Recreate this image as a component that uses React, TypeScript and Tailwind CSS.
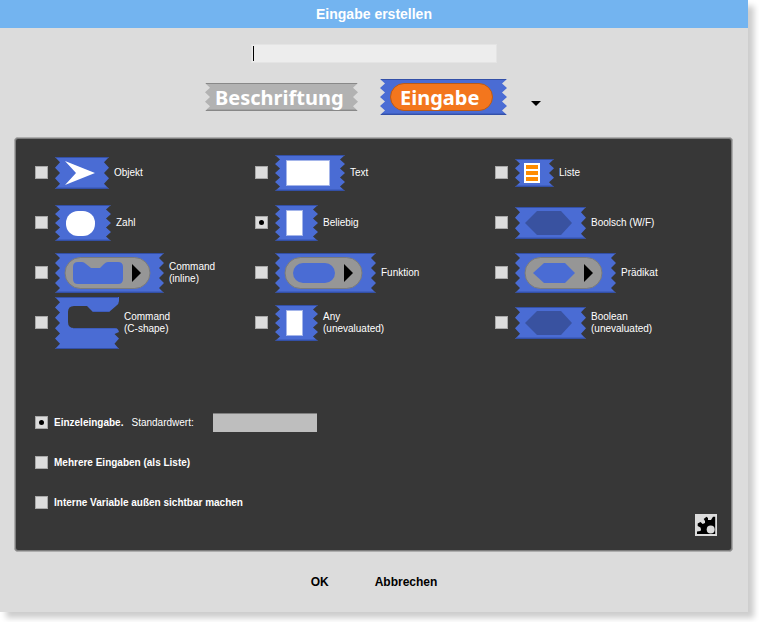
import type { ReactNode } from "react";

const BLUE = "#4a6cd4";
const BLUE_EDGE = "#3350a8";
const JAG = 10;

function jaggedPath(w: number, h: number): string {
  const jags = Math.round(h / JAG);
  const step = h / jags / 2;
  const points: string[] = ["0,0", `${w},0`];
  for (let i = 1; i <= jags * 2; i++) {
    points.push(`${i % 2 ? w - JAG / 2 : w},${step * i}`);
  }
  for (let i = jags * 2; i > 0; i--) {
    points.push(`${i % 2 ? JAG / 2 : 0},${step * i}`);
  }
  return points.join(" ");
}

type BlockProps = {
  w: number;
  h: number;
  fill?: string;
  edge?: string;
  children?: ReactNode;
};

function JaggedBlock({ w, h, fill = BLUE, edge = BLUE_EDGE, children }: BlockProps) {
  return (
    <svg width={w} height={h} viewBox={`0 0 ${w} ${h}`} className="shrink-0" aria-hidden="true">
      <polygon points={jaggedPath(w, h)} fill={fill} />
      <path d={`M1 .5H${w - 1}M1 ${h - 0.5}H${w - 1}`} stroke={edge} strokeWidth="1" />
      <path d={`M2 ${h - 1.5}H${w - 2}`} stroke={edge} strokeWidth="1" opacity=".4" />
      {children}
    </svg>
  );
}

function Ring({ w, children }: { w: number; children: ReactNode }) {
  return (
    <JaggedBlock w={w} h={40}>
      <rect x="10" y="4.500" width={w - 24} height="31" rx="15.500" fill="#969696" stroke="#7b7b7b" />
      {children}
      <path d={`M${w - 32} 11l9 9l-9 9z`} fill="#000" />
    </JaggedBlock>
  );
}

function AnyBlock() {
  return (
    <JaggedBlock w={43} h={36}>
      <rect x="11.5" y="5.5" width="16" height="25" fill="#fff" stroke="#a4b5ea" />
      <rect x="12" y="6" width="15" height="24" fill="#fff" />
    </JaggedBlock>
  );
}

function BoolBlock() {
  return (
    <JaggedBlock w={71} h={32}>
      <path d="M10 16L22 4H46L57 16L46 28H22z" fill="#3952a0" />
    </JaggedBlock>
  );
}

const types: { label: string; block: ReactNode; checked?: boolean }[] = [
  {
    label: "Objekt",
    block: (
      <JaggedBlock w={54} h={32}>
        <path d="M10 4L40 16L10 28L21 16z" fill="#fff" />
      </JaggedBlock>
    ),
  },
  {
    label: "Text",
    block: (
      <JaggedBlock w={70} h={36}>
        <rect x="11.5" y="5.5" width="43" height="25" fill="#fff" stroke="#a4b5ea" />
      </JaggedBlock>
    ),
  },
  {
    label: "Liste",
    block: (
      <JaggedBlock w={39} h={28}>
        <rect x="9" y="4" width="16" height="20" fill="#fff" />
        <path d="M11 8H23M11 14H23M11 20H23" stroke="#ff8c00" strokeWidth="4" />
      </JaggedBlock>
    ),
  },
  {
    label: "Zahl",
    block: (
      <JaggedBlock w={56} h={36}>
        <rect x="11" y="6" width="29" height="25" rx="12" fill="#fff" />
      </JaggedBlock>
    ),
  },
  { label: "Beliebig", block: <AnyBlock />, checked: true },
  { label: "Boolsch (W/F)", block: <BoolBlock /> },
  {
    label: "Command\n(inline)",
    block: (
      <Ring w={109}>
        <path
          d="M23 9H27Q29 9 31 11L36 15H45L49 11Q51 9 53 9H63Q68 9 68 14V26Q68 31 63 31H23Q18 31 18 26V14Q18 9 23 9z"
          fill={BLUE}
        />
      </Ring>
    ),
  },
  {
    label: "Funktion",
    block: (
      <Ring w={101}>
        <rect x="18" y="10" width="42" height="20" rx="10" fill={BLUE} />
      </Ring>
    ),
  },
  {
    label: "Prädikat",
    block: (
      <Ring w={101}>
        <path d="M18 20L29 10H50L60 20L50 30H29z" fill={BLUE} />
      </Ring>
    ),
  },
  {
    label: "Command\n(C-shape)",
    block: (
      <svg width="64" height="52" viewBox="0 0 64 52" className="shrink-0" aria-hidden="true">
        <path
          d="M0 0H64V4Q64 7 61 9L54 15H38L32 9H19Q13 9 13 15V25Q13 31 19 31H60Q63 31 64 35L59.500 37L64 41.600L59.500 46.800L64 52H0L5 46.800L0 41.600L5 36.400L0 31.200L5 26L0 20.800L5 15.600L0 10.400L5 5.200z"
          fill={BLUE}
        />
        <path d="M1 .5H63M1 51.500H63" stroke={BLUE_EDGE} />
        <path d="M38 14.500H54M18 31.500H61" stroke={BLUE_EDGE} opacity=".5" />
      </svg>
    ),
  },
  { label: "Any\n(unevaluated)", block: <AnyBlock /> },
  { label: "Boolean\n(unevaluated)", block: <BoolBlock /> },
];

const toggle =
  "grid size-[13px] shrink-0 appearance-none place-content-center border border-[#a8a8a8] bg-[#dcdcdc] checked:before:size-[5px] checked:before:rounded-full checked:before:bg-black checked:before:content-['']";

export default function App() {
  return (
    <div className="pr-[11px] pb-[11px] font-['Liberation_Sans',Arial,sans-serif]">
      <form className="bg-[#dcdcdc] shadow-[6px_6px_6px_rgba(0,0,0,0.2)]">
        <h1 className="bg-[#73b4f0] text-center text-sm leading-7 font-bold text-white">
          Eingabe erstellen
        </h1>

        <div className="relative mx-auto mt-4 w-[246px]">
          <input
            aria-label="Name"
            className="block h-[19px] w-full border border-[#e4e4e4] bg-[#ededed] px-1 text-xs outline-none"
          />
          <span className="absolute top-[2px] left-[2px] h-[15px] w-px bg-black" />
        </div>

        <div className="mt-4 flex items-center justify-center pr-0.5 font-['Noto_Sans',sans-serif] text-xl font-bold text-white">
          <button type="button" className="mr-[22px] grid">
            <span className="col-start-1 row-start-1 [&>svg]:block">
              <JaggedBlock w={153} h={28} fill="#b2b2b2" edge="#888888" />
            </span>
            <span className="col-start-1 row-start-1 pt-0.5 pl-[10px] text-left leading-[26px]">
              Beschriftung
            </span>
          </button>
          <button type="button" className="grid">
            <span className="col-start-1 row-start-1 [&>svg]:block">
              <JaggedBlock w={127} h={36}>
                <rect x="10.500" y="4.500" width="102" height="27" rx="13.500" fill="#f3761d" stroke="#b85a18" />
              </JaggedBlock>
            </span>
            <span className="col-start-1 row-start-1 pt-0.5 pl-5 text-left leading-[34px]">
              Eingabe
            </span>
          </button>
          <button type="button" aria-label="Mehr" className="mt-3 ml-6">
            <svg width="10" height="5" viewBox="0 0 10 5" className="block">
              <path d="M0 0H10L5 5z" fill="#000" />
            </svg>
          </button>
        </div>

        <section className="mx-[14px] mt-[22px] mr-[15px] rounded border border-[#adadad] bg-[#373737] pt-[10px] pr-[15px] pb-[15px] pl-5 text-[10px] leading-3 text-white shadow-[inset_0_0_0_1px_#7d7d7d]">
          <div className="grid auto-rows-[49px] grid-cols-[220fr_240fr_222fr] gap-y-px">
            {types.map(({ label, block, checked }) => (
              <label key={label} className="flex items-center">
                <input type="radio" name="type" defaultChecked={checked} className={toggle} />
                <span className="mr-[5px] ml-[7px] shrink-0 [&>svg]:block">{block}</span>
                <span className="whitespace-pre-line">{label}</span>
              </label>
            ))}
          </div>

          <div className="mt-14 flex items-end justify-between">
            <div className="grid auto-rows-[39px] gap-y-px pb-[14px] font-bold">
              <div className="flex items-center">
                <label className="flex items-center gap-1.5">
                  <input type="radio" name="arity" defaultChecked className={toggle} />
                  Einzeleingabe.
                </label>
                <label htmlFor="default" className="ml-2 font-normal">
                  Standardwert:
                </label>
                <input
                  id="default"
                  className="ml-[19px] h-[19px] w-[104px] border-t border-[#808080] bg-[#bebebe] px-1 text-black"
                />
              </div>
              <label className="flex items-center gap-1.5">
                <input type="radio" name="arity" className={toggle} />
                Mehrere Eingaben (als Liste)
              </label>
              <label className="flex items-center gap-1.5">
                <input type="radio" name="arity" className={toggle} />
                Interne Variable außen sichtbar machen
              </label>
            </div>
            <button type="button" aria-label="Optionen" className="bg-[#dcdcdc]">
              <svg width="22" height="22" viewBox="0 0 22 22" className="block">
                <path
                  d="M2 20V17.500L5.500 17Q6.500 15.500 5.500 13.500L2.700 12V9.500L5.500 8L7.700 10L10 9V7L8.700 5L11.500 2.700L13 4V6H16L18 2.700H20.200V20z"
                  fill="#000"
                />
                <circle cx="15.700" cy="15.500" r="4" fill="#dcdcdc" />
              </svg>
            </button>
          </div>
        </section>

        <div className="flex justify-center gap-[46px] pt-[22px] pb-[22px] text-xs leading-4 font-bold text-black">
          <button type="button">OK</button>
          <button type="button">Abbrechen</button>
        </div>
      </form>
    </div>
  );
}
